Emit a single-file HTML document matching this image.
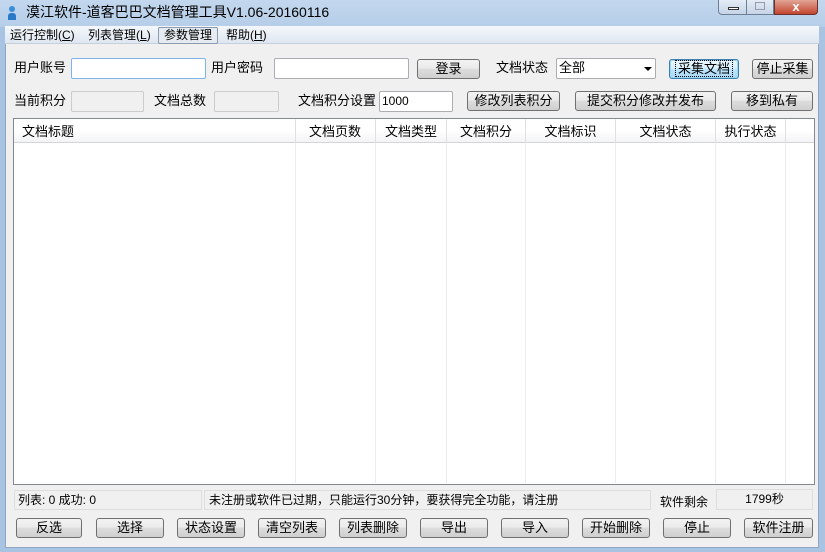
<!DOCTYPE html>
<html><head><meta charset="utf-8"><style>
*{box-sizing:border-box;margin:0;padding:0}
body{width:825px;height:552px;overflow:hidden;background:#a9c4e2;font-family:"Liberation Sans","Noto Sans CJK SC",sans-serif;font-size:12px;color:#000;position:relative}
.a{position:absolute}
.title{left:0;top:0;width:825px;height:27px;background:linear-gradient(#c3d8ee,#b5cde8)}
.client{left:5px;top:26px;width:814px;height:522px;background:#f0f0f0;border:1px solid #8ea6c2}
.menu{left:5px;top:26px;width:814px;height:18px;background:linear-gradient(#f4f7fb,#dfe7f1);border-bottom:1px solid #c6d0dc}
.mi{top:27px;height:16px;line-height:16px;font-size:12px}
.btn{position:absolute;height:20px;border:1px solid #707070;border-radius:3px;background:linear-gradient(#f2f2f2 0%,#ebebeb 45%,#dddddd 50%,#cfcfcf 100%);text-align:center;line-height:18px;font-size:13px}
.inp{position:absolute;height:21px;background:#fff;border:1px solid #abadb3;border-radius:2px}
.dis{position:absolute;height:21px;background:#f0f0f0;border:1px solid #ccc;border-radius:2px}
.lbl{position:absolute;font-size:13px;line-height:16px}
.col{position:absolute;top:119px;height:364px;border-left:1px solid #ececec}
.hd{position:absolute;top:120px;height:23px;line-height:23px;font-size:13px;text-align:center;border-right:1px solid #e0e0e0}
</style></head><body>
<div class="a title"></div>
<div class="a" style="left:8px;top:6px;width:8px;height:14px">
 <div class="a" style="left:1px;top:0;width:6px;height:6px;border-radius:50%;background:#3a8ed8"></div>
 <div class="a" style="left:0;top:7px;width:8px;height:7px;border-radius:3px 3px 0 0;background:#2a78c8"></div>
</div>
<div class="a" style="left:26px;top:3px;font-size:14px;line-height:18px">漠江软件-道客巴巴文档管理工具V1.06-20160116</div>
<div class="a" style="left:718px;top:0;width:56px;height:15px;border:1px solid #6d7f96;border-top:none;border-radius:0 0 0 4px;background:linear-gradient(#e4ecf6,#c5d4e7)"></div>
<div class="a" style="left:746px;top:0;width:1px;height:15px;background:#6d7f96"></div>
<div class="a" style="left:728px;top:7px;width:11px;height:3px;border:1px solid #333;background:#fff"></div>
<div class="a" style="left:755px;top:2px;width:10px;height:8px;border:1px solid #99a;"></div>
<div class="a" style="left:774px;top:0;width:44px;height:15px;border:1px solid #6d3030;border-top:none;border-radius:0 0 4px 0;background:linear-gradient(#e2a596,#c4452e);color:#fff;text-align:center;font-weight:bold;font-size:13px;line-height:13px">x</div>
<div class="a client"></div>
<div class="a menu"></div>
<div class="a" style="left:158px;top:27px;width:60px;height:17px;border:1px solid #8b9bb0;border-radius:2px;background:#e6ebf2"></div>
<div class="a mi" style="left:10px">运行控制(<u>C</u>)</div>
<div class="a mi" style="left:88px">列表管理(<u>L</u>)</div>
<div class="a mi" style="left:164px">参数管理</div>
<div class="a mi" style="left:226px">帮助(<u>H</u>)</div>

<div class="lbl" style="left:14px;top:60px">用户账号</div>
<div class="inp" style="left:71px;top:58px;width:135px;border-color:#7eb4ea"></div>
<div class="lbl" style="left:211px;top:60px">用户密码</div>
<div class="inp" style="left:274px;top:58px;width:135px"></div>
<div class="btn" style="left:417px;top:59px;width:63px">登录</div>
<div class="lbl" style="left:496px;top:60px">文档状态</div>
<div class="inp" style="left:556px;top:58px;width:100px;font-size:13px;line-height:18px;padding-left:2px">全部<span class="a" style="right:3px;top:8px;border:4px solid transparent;border-top:4px solid #000;border-bottom:none"></span></div>
<div class="btn" style="left:669px;top:59px;width:70px;border-color:#3c7fb1;box-shadow:inset 0 0 0 1px #9ad6f5;background:linear-gradient(#eaf6fd,#d9f0fc 45%,#bee6fd 50%,#a7d9f5)"><span style="outline:1px dotted #000;padding:0 2px">采集文档</span></div>
<div class="btn" style="left:752px;top:59px;width:61px">停止采集</div>

<div class="lbl" style="left:14px;top:93px">当前积分</div>
<div class="dis" style="left:71px;top:91px;width:73px"></div>
<div class="lbl" style="left:154px;top:93px">文档总数</div>
<div class="dis" style="left:214px;top:91px;width:65px"></div>
<div class="lbl" style="left:298px;top:93px">文档积分设置</div>
<div class="inp" style="left:379px;top:91px;width:74px;font-size:12px;line-height:18px;padding-left:2px">1000</div>
<div class="btn" style="left:467px;top:91px;width:93px">修改列表积分</div>
<div class="btn" style="left:575px;top:91px;width:141px">提交积分修改并发布</div>
<div class="btn" style="left:731px;top:91px;width:82px">移到私有</div>

<div class="a" style="left:13px;top:118px;width:802px;height:367px;background:#fff;border:1px solid #828790"></div>
<div class="a" style="left:14px;top:119px;width:800px;height:24px;background:linear-gradient(#fff 0%,#fff 50%,#f3f4f6 100%);border-bottom:1px solid #d5d5d5"></div>
<div class="col" style="left:295px"></div><div class="col" style="left:375px"></div><div class="col" style="left:446px"></div><div class="col" style="left:525px"></div><div class="col" style="left:615px"></div><div class="col" style="left:715px"></div><div class="col" style="left:785px"></div>
<div class="hd" style="left:14px;width:282px;text-align:left;padding-left:8px">文档标题</div>
<div class="hd" style="left:296px;width:80px;text-align:right;padding-right:14px">文档页数</div>
<div class="hd" style="left:376px;width:71px">文档类型</div>
<div class="hd" style="left:447px;width:79px">文档积分</div>
<div class="hd" style="left:526px;width:90px">文档标识</div>
<div class="hd" style="left:616px;width:100px">文档状态</div>
<div class="hd" style="left:716px;width:70px">执行状态</div>

<div class="a" style="left:14px;top:490px;width:188px;height:20px;border:1px solid #ddd;font-size:12px;line-height:18px;padding-left:3px">列表: 0 成功: 0</div>
<div class="a" style="left:204px;top:490px;width:447px;height:20px;border:1px solid #ddd;font-size:12px;line-height:18px;padding-left:4px">未注册或软件已过期，只能运行30分钟，要获得完全功能，请注册</div>
<div class="lbl" style="left:660px;top:494px;font-size:12px">软件剩余</div>
<div class="a" style="left:716px;top:489px;width:97px;height:21px;border:1px solid #ddd;font-size:12px;line-height:18px;text-align:center">1799秒</div>

<div class="btn" style="left:16px;top:518px;width:66px">反选</div>
<div class="btn" style="left:96px;top:518px;width:68px">选择</div>
<div class="btn" style="left:177px;top:518px;width:68px">状态设置</div>
<div class="btn" style="left:258px;top:518px;width:68px">清空列表</div>
<div class="btn" style="left:339px;top:518px;width:68px">列表删除</div>
<div class="btn" style="left:420px;top:518px;width:68px">导出</div>
<div class="btn" style="left:501px;top:518px;width:68px">导入</div>
<div class="btn" style="left:582px;top:518px;width:68px">开始删除</div>
<div class="btn" style="left:663px;top:518px;width:68px">停止</div>
<div class="btn" style="left:744px;top:518px;width:69px">软件注册</div>
</body></html>
